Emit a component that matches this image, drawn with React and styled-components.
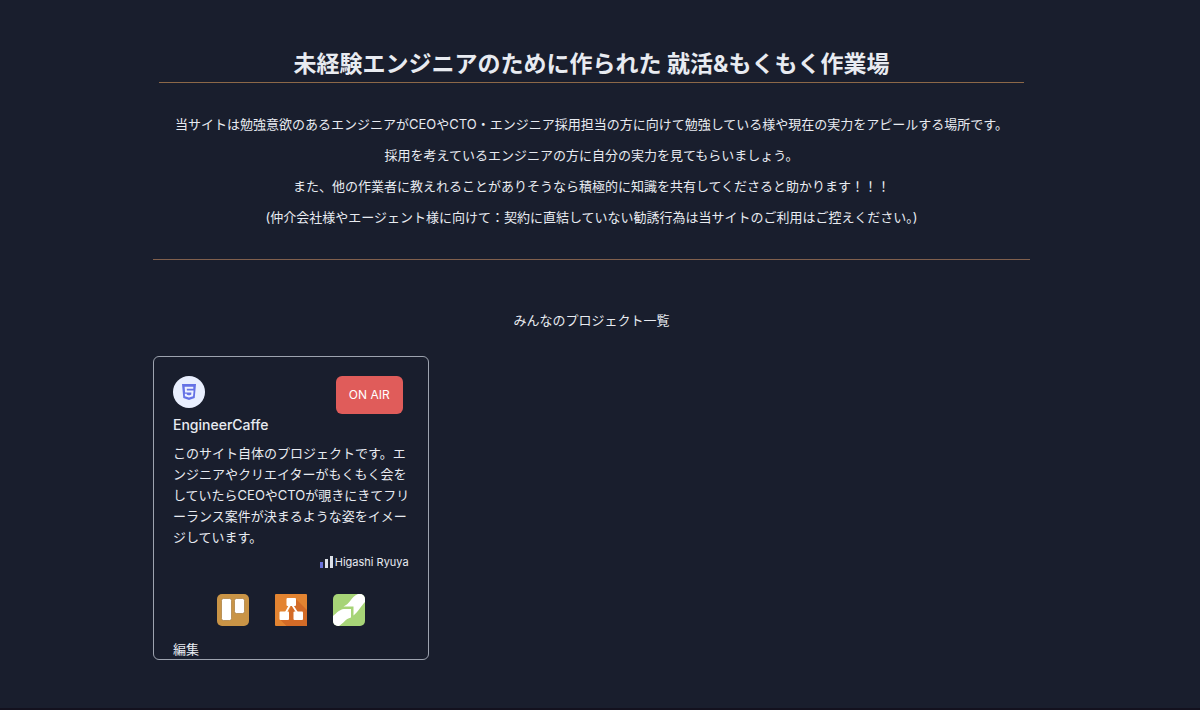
import React from "react";
import styled, { createGlobalStyle } from "styled-components";

const GlobalStyle = createGlobalStyle`
  *, *::before, *::after { box-sizing: border-box; }
  body {
    margin: 0;
    background: #191e2d;
    color: #e8ebf1;
    font-family: Inter, "Noto Sans CJK JP", sans-serif;
    font-size: 13px;
    line-height: 20px;
  }
  h1, h2, h3, p { margin: 0; }
`;

const Page = styled.div`
  min-height: 100vh;
  display: flex;
  flex-direction: column;
  padding: 48px 17px 0 0;
`;

const Main = styled.main`
  flex: 1;
  width: 100%;
  max-width: 877px;
  margin: 0 auto;
  padding-bottom: 48px;
`;

const Intro = styled.section`
  border-bottom: 1px solid #80604d;
  padding: 0 6px 26px;
  text-align: center;
`;

const Title = styled.h1`
  border-bottom: 1px solid #8c6848;
  padding-bottom: 2px;
  margin-bottom: 26px;
  font-size: 23px;
  font-weight: 700;
  line-height: 32px;
`;

const Lead = styled.p`
  line-height: 31px;
`;

const ListTitle = styled.h2`
  margin: 50px 0 26px;
  font-size: 13px;
  font-weight: 400;
  line-height: 20px;
  text-align: center;
`;

const ProjectGrid = styled.div`
  display: grid;
  grid-template-columns: repeat(auto-fill, minmax(264px, 1fr));
  gap: 25px;
`;

const Card = styled.article`
  border: 1px solid #9da3af;
  border-radius: 6px;
  padding: 19px 19px 0;
`;

const CardHeader = styled.header`
  display: flex;
  justify-content: space-between;
  align-items: flex-start;
  padding-right: 6px;
`;

const Avatar = styled.div`
  display: flex;
  align-items: center;
  justify-content: center;
  width: 32px;
  height: 32px;
  margin-bottom: 7px;
  border-radius: 50%;
  background: #e9effe;
`;

const ProjectName = styled.h3`
  font-size: 14px;
  font-weight: 500;
  line-height: 20px;
`;

const OnAirButton = styled.button`
  height: 38px;
  padding: 0 13px;
  border: 0;
  border-radius: 6px;
  background: #e05c5a;
  color: #fff;
  font: inherit;
  font-size: 12px;
  cursor: pointer;
`;

const Description = styled.p`
  margin: 8px -6px 0 0;
  line-height: 21px;
  line-break: anywhere;
`;

const Author = styled.p`
  display: flex;
  justify-content: flex-end;
  align-items: center;
  gap: 1px;
  margin-top: 4px;
  font-size: 11px;
  line-height: 20px;
`;

const ToolLinks = styled.nav`
  display: flex;
  justify-content: center;
  gap: 26px;
  margin-top: 22px;
`;

const ToolLink = styled.a`
  display: block;
  height: 32px;
`;

const EditLink = styled.a`
  display: block;
  width: fit-content;
  margin-top: 14px;
  line-height: 19px;
  color: inherit;
  text-decoration: none;
`;

const Footer = styled.footer`
  height: 2px;
  margin-right: -17px;
  background: #13111e;
`;

const leads = [
  "当サイトは勉強意欲のあるエンジニアがCEOやCTO・エンジニア採用担当の方に向けて勉強している様や現在の実力をアピールする場所です。",
  "採用を考えているエンジニアの方に自分の実力を見てもらいましょう。",
  "また、他の作業者に教えれることがありそうなら積極的に知識を共有してくださると助かります！！！",
  "(仲介会社様やエージェント様に向けて：契約に直結していない勧誘行為は当サイトのご利用はご控えください。)",
];

function Html5Icon() {
  return (
    <svg width="16" height="18" viewBox="0 0 16 18" aria-hidden="true">
      <path d="M1 1h14l-1.3 14L8 17l-5.7-2z" fill="#6572e5" />
      <path d="M12.3 4.8H4.7l.3 3.7h6.5l-.4 4L8 13.5l-3.1-1-.1-1.7" fill="none" stroke="#eef2ff" strokeWidth="2" />
    </svg>
  );
}

function LevelIcon() {
  return (
    <svg width="14" height="12" viewBox="0 0 14 12" aria-hidden="true">
      <path d="M0 6h3v6H0z" fill="#6870d8" />
      <path d="M5 3h3v9H5zM10 0h3v12h-3z" fill="#dce0e7" />
    </svg>
  );
}

function BoardIcon() {
  return (
    <svg width="32" height="32" viewBox="0 0 32 32" aria-hidden="true">
      <rect width="32" height="32" rx="5" fill="#c99446" />
      <rect x="4.5" y="4.5" width="10" height="22" rx="2" fill="#fff" stroke="#a67a3b" strokeWidth=".7" />
      <rect x="17.5" y="4.5" width="10" height="15" rx="2" fill="#fff" stroke="#a67a3b" strokeWidth=".7" />
    </svg>
  );
}

function DiagramIcon() {
  return (
    <svg width="32" height="32" viewBox="0 0 32 32" aria-hidden="true">
      <rect width="32" height="32" rx="1" fill="#e38431" />
      <path d="M20.5 4.5 32 16v16H11.5l-6-6 8-7 3-8z" fill="#d36b27" />
      <path d="m16 9-6 11m6-11 7 11" fill="none" stroke="#fff" strokeWidth="1.8" />
      <rect x="11.5" y="4" width="9.5" height="8" rx="1" fill="#fff" />
      <rect x="4.5" y="17.5" width="9.5" height="8.5" rx="1" fill="#fff" />
      <rect x="18.5" y="17.5" width="9.5" height="8.5" rx="1" fill="#fff" />
    </svg>
  );
}

function ArrowIcon() {
  return (
    <svg width="32" height="32" viewBox="0 0 32 32" aria-hidden="true">
      <clipPath id="arrow-tile"><rect width="32" height="32" rx="5" /></clipPath>
      <g clipPath="url(#arrow-tile)">
        <path d="M0 0h32v32H0z" fill="#a7d477" />
        <path d="M0 22C4 19 6 15.5 11 15h7v8.5C12 25 11 29 6 32H0z" fill="#fff" />
        <path d="M10.5 12.5C17 10 18 3 25 0h7v8c-4 4-6 9-11.5 13.5v-9z" fill="#fff" />
      </g>
    </svg>
  );
}

const tools = [
  { name: "Board", Icon: BoardIcon },
  { name: "Diagram", Icon: DiagramIcon },
  { name: "Workflow", Icon: ArrowIcon },
];

function ProjectCard() {
  return (
    <Card>
      <CardHeader>
        <div>
          <Avatar><Html5Icon /></Avatar>
          <ProjectName>EngineerCaffe</ProjectName>
        </div>
        <OnAirButton type="button">ON AIR</OnAirButton>
      </CardHeader>
      <Description>
        このサイト自体のプロジェクトです。エンジニアやクリエイターがもくもく会をしていたらCEOやCTOが覗きにきてフリーランス案件が決まるような姿をイメージしています。
      </Description>
      <Author><LevelIcon />Higashi Ryuya</Author>
      <ToolLinks>
        {tools.map(({ name, Icon }) => (
          <ToolLink key={name} href="#" aria-label={name}><Icon /></ToolLink>
        ))}
      </ToolLinks>
      <EditLink href="#">編集</EditLink>
    </Card>
  );
}

export default function App() {
  return (
    <>
      <GlobalStyle />
      <Page lang="ja">
        <Main>
          <Intro>
            <Title>未経験エンジニアのために作られた 就活&amp;もくもく作業場</Title>
            {leads.map((text) => <Lead key={text}>{text}</Lead>)}
          </Intro>
          <ListTitle>みんなのプロジェクト一覧</ListTitle>
          <ProjectGrid><ProjectCard /></ProjectGrid>
        </Main>
        <Footer />
      </Page>
    </>
  );
}
